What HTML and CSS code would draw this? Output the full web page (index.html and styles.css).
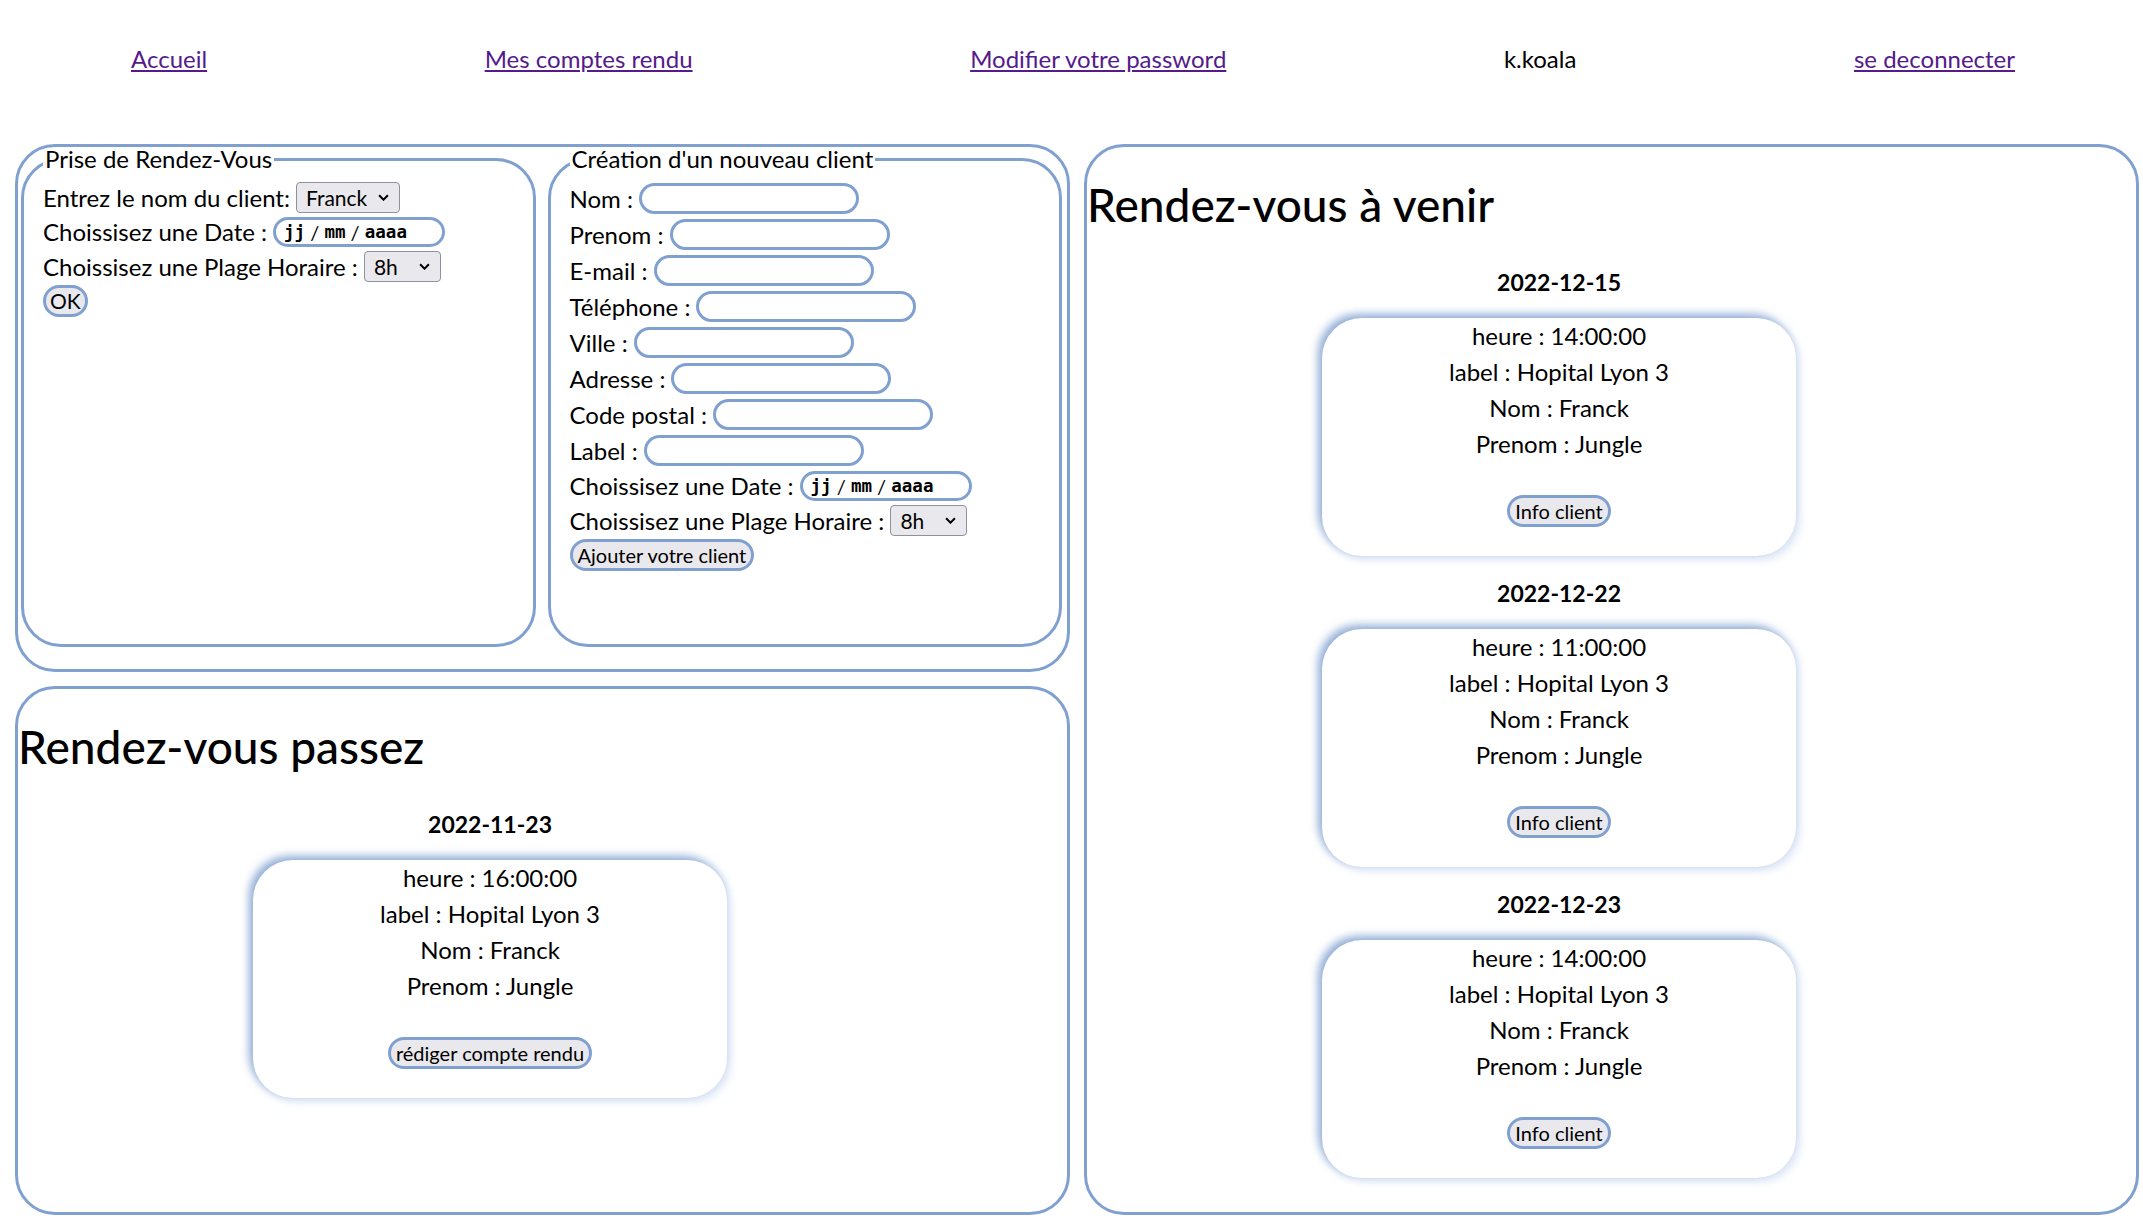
FILE: index.html
```html
<!DOCTYPE html>
<html lang="fr">
<head>
<meta charset="utf-8">
<title>Rendez-vous</title>
<link rel="stylesheet" href="styles.css">
</head>
<body>
<nav class="topnav">
  <ul class="nav-list">
    <li><a href="#">Accueil</a></li>
    <li><a href="#">Mes comptes rendu</a></li>
    <li><a href="#">Modifier votre password</a></li>
    <li><span class="user">k.koala</span></li>
    <li><a href="#">se deconnecter</a></li>
  </ul>
</nav>
<main class="layout">
  <section class="forms-box">
    <fieldset class="panel panel-rdv">
      <legend>Prise de Rendez-Vous</legend>
      <div class="row"><label>Entrez le nom du client:</label><span class="select-wrap"><select class="select select-name"><option>Franck</option></select><svg class="chev" viewBox="0 0 10 6"><path d="M1 1 L5 5 L9 1" fill="none" stroke="#000" stroke-width="1.8"/></svg></span></div>
      <div class="row"><label>Choissisez une Date :</label><span class="date-input"><span class="seg">jj</span>&nbsp;/&nbsp;<span class="seg">mm</span>&nbsp;/&nbsp;<span class="seg">aaaa</span></span></div>
      <div class="row"><label>Choissisez une Plage Horaire :</label><span class="select-wrap"><select class="select select-hour"><option>8h</option></select><svg class="chev" viewBox="0 0 10 6"><path d="M1 1 L5 5 L9 1" fill="none" stroke="#000" stroke-width="1.8"/></svg></span></div>
      <div class="row"><button class="btn btn-ok" type="button">OK</button></div>
    </fieldset>
    <fieldset class="panel panel-client">
      <legend>Création d'un nouveau client</legend>
      <div class="row row-text"><label>Nom :</label><input class="text-input" type="text"></div>
      <div class="row row-text"><label>Prenom :</label><input class="text-input" type="text"></div>
      <div class="row row-text"><label>E-mail :</label><input class="text-input" type="text"></div>
      <div class="row row-text"><label>Téléphone :</label><input class="text-input" type="text"></div>
      <div class="row row-text"><label>Ville :</label><input class="text-input" type="text"></div>
      <div class="row row-text"><label>Adresse :</label><input class="text-input" type="text"></div>
      <div class="row row-text"><label>Code postal :</label><input class="text-input" type="text"></div>
      <div class="row row-text"><label>Label :</label><input class="text-input" type="text"></div>
      <div class="row row-date"><label>Choissisez une Date :</label><span class="date-input"><span class="seg">jj</span>&nbsp;/&nbsp;<span class="seg">mm</span>&nbsp;/&nbsp;<span class="seg">aaaa</span></span></div>
      <div class="row"><label>Choissisez une Plage Horaire :</label><span class="select-wrap"><select class="select select-hour"><option>8h</option></select><svg class="chev" viewBox="0 0 10 6"><path d="M1 1 L5 5 L9 1" fill="none" stroke="#000" stroke-width="1.8"/></svg></span></div>
      <div class="row"><button class="btn" type="button">Ajouter votre client</button></div>
    </fieldset>
  </section>

  <section class="rdv-box past">
    <h1 class="rdv-title">Rendez-vous passez</h1>
    <div class="rdv-list">
      <h3 class="rdv-date">2022-11-23</h3>
      <div class="rdv-card">
        <p>heure : 16:00:00</p>
        <p>label : Hopital Lyon 3</p>
        <p>Nom : Franck</p>
        <p>Prenom : Jungle</p>
        <div class="card-action"><button class="btn" type="button">rédiger compte rendu</button></div>
      </div>
    </div>
  </section>

  <section class="rdv-box upcoming">
    <h1 class="rdv-title">Rendez-vous à venir</h1>
    <div class="rdv-list">
      <h3 class="rdv-date">2022-12-15</h3>
      <div class="rdv-card">
        <p>heure : 14:00:00</p>
        <p>label : Hopital Lyon 3</p>
        <p>Nom : Franck</p>
        <p>Prenom : Jungle</p>
        <div class="card-action"><button class="btn" type="button">Info client</button></div>
      </div>
      <h3 class="rdv-date">2022-12-22</h3>
      <div class="rdv-card">
        <p>heure : 11:00:00</p>
        <p>label : Hopital Lyon 3</p>
        <p>Nom : Franck</p>
        <p>Prenom : Jungle</p>
        <div class="card-action"><button class="btn" type="button">Info client</button></div>
      </div>
      <h3 class="rdv-date">2022-12-23</h3>
      <div class="rdv-card">
        <p>heure : 14:00:00</p>
        <p>label : Hopital Lyon 3</p>
        <p>Nom : Franck</p>
        <p>Prenom : Jungle</p>
        <div class="card-action"><button class="btn" type="button">Info client</button></div>
      </div>
    </div>
  </section>
</main>
</body>
</html>
```
FILE: styles.css
```css
body {
  margin: 0;
  font-family: Lato, "Open Sans", sans-serif;
  font-size: 24px;
  color: #000;
  background: #fff;
}

/* ---------- navigation ---------- */
.topnav {
  height: 144px;
}
.nav-list {
  display: flex;
  justify-content: space-between;
  list-style: none;
  margin: 0;
  padding: 41px 128px 0 131px;
  line-height: 36px;
}
.nav-list a {
  color: #551a8b;
  text-decoration: underline;
}

/* ---------- grid ---------- */
.layout {
  display: grid;
  grid-template-columns: 1fr 1fr;
  grid-template-rows: 528px 529px;
  column-gap: 14px;
  row-gap: 14px;
  padding: 0 4px 0 15px;
}

.forms-box {
  grid-column: 1;
  grid-row: 1;
  display: flex;
  gap: 12px;
  border: 3px solid #80a0d0;
  border-radius: 40px;
  padding: 0 5px 22px 3px;
}

.panel {
  flex: 1 1 0;
  min-width: 0;
  margin: 0;
  border: 3px solid #80a0d0;
  border-radius: 40px;
  padding: 9px 19px 0 19px;
}
.panel legend {
  padding: 0 2px;
  line-height: 24px;
}

.row {
  display: flex;
  align-items: center;
  height: 34.5px;
  white-space: nowrap;
}
.row-text {
  height: 36px;
}
.row-date {
  height: 35px;
}

.text-input {
  box-sizing: border-box;
  width: 220px;
  height: 31px;
  margin: 0 0 0 6px;
  padding: 0 12px;
  border: 3px solid #80a0d0;
  border-radius: 16px;
  background: #fff;
  font: inherit;
}

.date-input {
  box-sizing: border-box;
  display: inline-flex;
  align-items: center;
  width: 172px;
  height: 30px;
  margin-left: 6px;
  padding-left: 8px;
  border: 3px solid #80a0d0;
  border-radius: 15px;
  background: #fff;
  font-size: 20px;
}
.date-input .seg {
  font-family: "DejaVu Sans Mono", monospace;
  font-size: 17.5px;
  font-weight: bold;
}

.select-wrap {
  position: relative;
  display: inline-block;
  margin-left: 6px;
}
.select {
  display: block;
  box-sizing: border-box;
  -webkit-appearance: none;
  appearance: none;
  height: 31px;
  padding: 0 0 0 9px;
  border: 1px solid #8f8f9d;
  border-radius: 4px;
  background: #e9e9ed;
  color: #000;
  font-family: inherit;
  font-size: 21px;
}
.select-name {
  width: 104px;
}
.select-hour {
  width: 77px;
}
.chev {
  position: absolute;
  right: 11px;
  top: 50%;
  width: 11px;
  height: 7px;
  margin-top: -3px;
  pointer-events: none;
}

.btn {
  box-sizing: border-box;
  height: 32px;
  padding: 0 5px;
  border: 3px solid #80a0d0;
  border-radius: 16px;
  background: #e9e9ed;
  color: #000;
  font-family: inherit;
  font-size: 20px;
  line-height: 1;
}
.btn-ok {
  font-size: 21px;
  padding: 0 4px;
}

/* ---------- rendez-vous lists ---------- */
.rdv-box {
  border: 3px solid #80a0d0;
  border-radius: 40px;
  min-width: 0;
}
.past {
  grid-column: 1;
  grid-row: 2;
}
.upcoming {
  grid-column: 2;
  grid-row: 1 / span 2;
}

.rdv-title {
  margin: 30px 0 13px;
  font-size: 46px;
  font-weight: 500;
  line-height: 1.2;
}

.rdv-list {
  width: 90%;
  display: flex;
  flex-direction: column;
  align-items: center;
}

.rdv-date {
  margin: 23px 0 21px;
  font-size: 23px;
  font-weight: bold;
  line-height: 28.8px;
}

.rdv-card {
  box-sizing: border-box;
  width: 474px;
  height: 238px;
  border-radius: 40px;
  background: #fff;
  box-shadow: -4px -4px 8px rgba(110, 145, 200, 0.75), 4px 4px 8px rgba(200, 215, 240, 0.6);
  text-align: center;
  font-size: 24px;
  line-height: 36px;
}
.rdv-card p {
  margin: 0;
}
.card-action {
  display: flex;
  justify-content: center;
  margin-top: 33px;
}
```
